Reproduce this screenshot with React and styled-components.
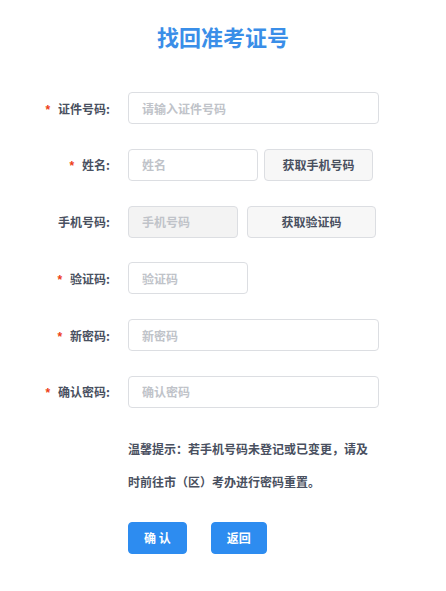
import React from "react";
import styled, { createGlobalStyle } from "styled-components";

const GlobalStyle = createGlobalStyle`
  html, body {
    margin: 0;
    padding: 0;
    background: #ffffff;
  }
  body {
    font-family: "Noto Sans CJK SC", "Noto Sans", sans-serif;
    color: #495060;
  }
  * { box-sizing: border-box; }
`;

const Page = styled.div`
  width: 446px;
  padding-top: 20px;
`;

const Title = styled.h1`
  margin: 0;
  text-align: center;
  font-size: 22px;
  line-height: 33px;
  font-weight: 700;
  color: #3a8ee8;
`;

const Form = styled.form`
  margin-top: 39px;
  display: flex;
  flex-direction: column;
  gap: 24.8px;
`;

const Row = styled.div`
  display: flex;
  align-items: center;
  height: 32px;
`;

const Label = styled.label`
  width: 128px;
  padding-right: 18px;
  text-align: right;
  font-size: 12px;
  font-weight: 700;
  color: #495060;
  white-space: nowrap;
`;

const Star = styled.span`
  color: #ed4014;
  margin-right: 8px;
  font-family: "Liberation Sans", sans-serif;
  font-size: 12px;
`;

const Fields = styled.div`
  display: flex;
  align-items: center;
  gap: ${(p) => p.$gap || 6}px;
`;

const Input = styled.input`
  width: ${(p) => p.$w || 251}px;
  height: 32px;
  padding: 0 13px;
  border: 1px solid #dcdee2;
  border-radius: 4px;
  background: ${(p) => (p.disabled ? "#f3f3f3" : "#ffffff")};
  font-family: "Noto Sans CJK SC", "Noto Sans", sans-serif;
  font-size: 12px;
  font-weight: 700;
  color: #495060;
  outline: none;
  &::placeholder {
    color: #c0c3c9;
  }
`;

const CodeButton = styled.button`
  width: ${(p) => p.$w}px;
  height: 32px;
  padding: 0;
  border: 1px solid #dcdee2;
  border-radius: 4px;
  background: #f7f7f7;
  font-family: "Noto Sans CJK SC", "Noto Sans", sans-serif;
  font-size: 12px;
  font-weight: 700;
  color: #495060;
`;

const Notice = styled.p`
  margin: -0.8px 0 0 128px;
  width: 245px;
  font-size: 12px;
  line-height: 33px;
  font-weight: 700;
  color: #495060;
`;

const Actions = styled.div`
  display: flex;
  gap: 24px;
  margin-left: 128px;
  margin-top: -0.8px;
`;

const PrimaryButton = styled.button`
  height: 32px;
  padding: 0 15px;
  border: 1px solid #2d8cf0;
  border-radius: 4px;
  background: #2d8cf0;
  color: #ffffff;
  font-family: "Noto Sans CJK SC", "Noto Sans", sans-serif;
  font-size: 12px;
  font-weight: 700;
  white-space: pre;
`;

function FormRow({ label, required, children }) {
  return (
    <Row>
      <Label>
        {required && <Star>*</Star>}
        {label}:
      </Label>
      {children}
    </Row>
  );
}

export default function App() {
  return (
    <Page>
      <GlobalStyle />
      <Title>找回准考证号</Title>
      <Form onSubmit={(e) => e.preventDefault()}>
        <FormRow label="证件号码" required>
          <Input placeholder="请输入证件号码" />
        </FormRow>
        <FormRow label="姓名" required>
          <Fields $gap={6}>
            <Input $w={130} placeholder="姓名" />
            <CodeButton type="button" $w={109}>获取手机号码</CodeButton>
          </Fields>
        </FormRow>
        <FormRow label="手机号码">
          <Fields $gap={9}>
            <Input $w={110} placeholder="手机号码" disabled />
            <CodeButton type="button" $w={129}>获取验证码</CodeButton>
          </Fields>
        </FormRow>
        <FormRow label="验证码" required>
          <Input $w={120} placeholder="验证码" />
        </FormRow>
        <FormRow label="新密码" required>
          <Input type="password" placeholder="新密码" />
        </FormRow>
        <FormRow label="确认密码" required>
          <Input type="password" placeholder="确认密码" />
        </FormRow>
        <Notice>温馨提示：若手机号码未登记或已变更，请及时前往市（区）考办进行密码重置。</Notice>
        <Actions>
          <PrimaryButton type="button">确 认</PrimaryButton>
          <PrimaryButton type="button">返回</PrimaryButton>
        </Actions>
      </Form>
    </Page>
  );
}
